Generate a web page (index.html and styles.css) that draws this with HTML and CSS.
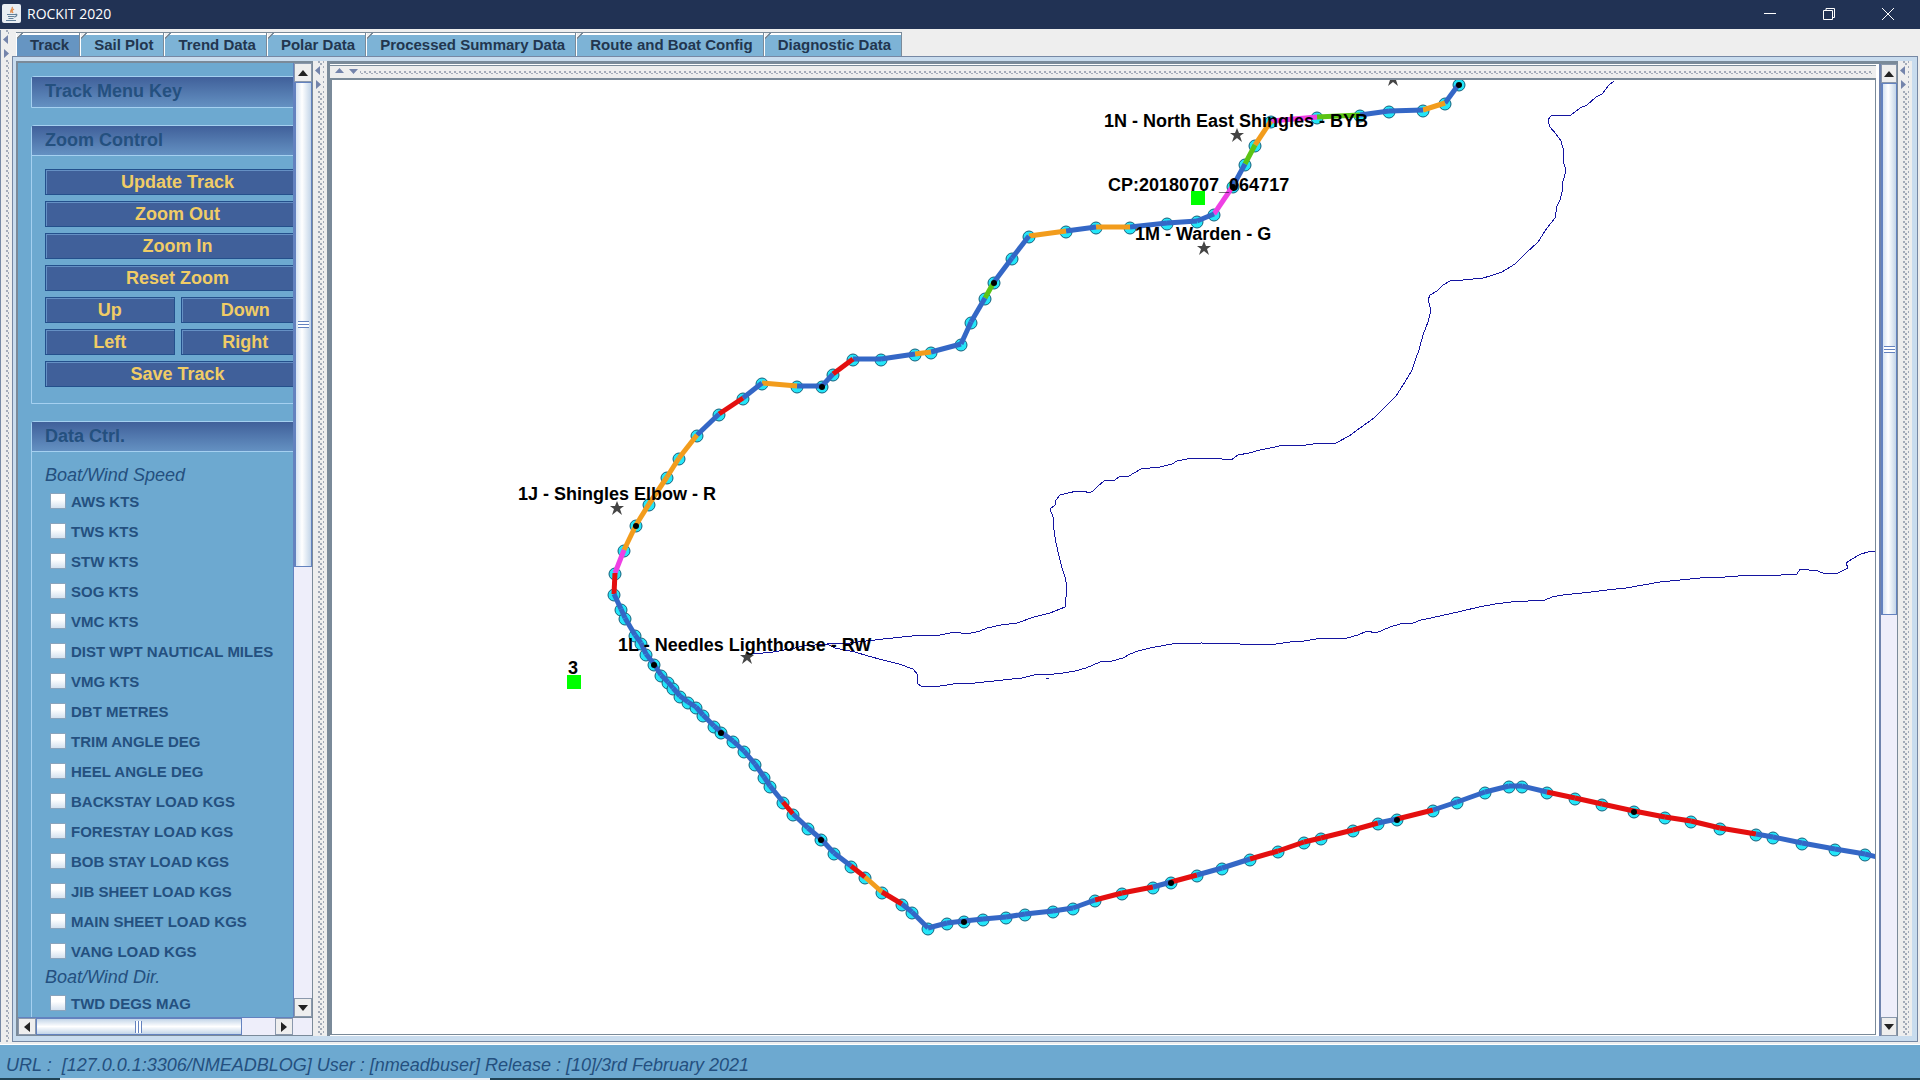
FILE: index.html
```html
<!DOCTYPE html>
<html lang="en">
<head>
    <meta charset="UTF-8">
    <meta name="viewport" content="width=device-width, initial-scale=1.0">
    <title>ROCKIT 2020</title>
    <link rel="stylesheet" href="styles.css">
</head>
<body>
    <header class="titlebar">
        <svg class="app-icon" width="19" height="19" viewBox="0 0 19 19">
            <rect width="19" height="19" rx="2" fill="#e9eef3"/>
            <path d="M10 3c2 2-3 3-1 6M12 5c-3 2-2 2-1 4" fill="none" stroke="#e08a4a" stroke-width="1.3"/>
            <path d="M5 10.500h8M6 12.500h6M6.500 14.500h5M4 16.500h10M13 10.500c3-1 2 2-1 2.500" fill="none" stroke="#62809a" stroke-width="1.2"/>
        </svg>
        <h1 class="title">ROCKIT 2020</h1>
        <button class="win-button" aria-label="Minimize">
            <svg width="14" height="14" viewBox="0 0 14 14"><path d="M1 6.500h12"/></svg>
        </button>
        <button class="win-button" aria-label="Restore">
            <svg width="14" height="14" viewBox="0 0 14 14"><path d="M1.500 3.500h9v9h-9zM4 3.500v-2h8.500v9h-2"/></svg>
        </button>
        <button class="win-button" aria-label="Close">
            <svg width="14" height="14" viewBox="0 0 14 14"><path d="M1 1l12 12M13 1L1 13"/></svg>
        </button>
    </header>

    <div class="main">
        <div class="splitter edge">
            <svg class="arrows" width="8" height="26" viewBox="0 0 8 26"><path d="M6 1v9L1 5.500zM2 15v9l5-4.500z"/></svg>
        </div>

        <div class="tab-pane">
            <nav class="tabs">
                <button class="tab active">Track</button>
                <button class="tab">Sail Plot</button>
                <button class="tab">Trend Data</button>
                <button class="tab">Polar Data</button>
                <button class="tab">Processed Summary Data</button>
                <button class="tab">Route and Boat Config</button>
                <button class="tab">Diagnostic Data</button>
            </nav>

            <div class="frame">
                <aside class="sidebar">
                    <div class="menu">
                        <section class="group">
                            <h2 class="group-title">Track Menu Key</h2>
                        </section>

                        <section class="group">
                            <h2 class="group-title">Zoom Control</h2>
                            <div class="zoom-buttons">
                                <button class="button">Update Track</button>
                                <button class="button">Zoom Out</button>
                                <button class="button">Zoom In</button>
                                <button class="button">Reset Zoom</button>
                                <button class="button half">Up</button>
                                <button class="button half">Down</button>
                                <button class="button half">Left</button>
                                <button class="button half">Right</button>
                                <button class="button">Save Track</button>
                            </div>
                        </section>

                        <section class="group">
                            <h2 class="group-title">Data Ctrl.</h2>
                            <div class="data-list">
                                <h3>Boat/Wind Speed</h3>
                                <label><input type="checkbox">AWS KTS</label>
                                <label><input type="checkbox">TWS KTS</label>
                                <label><input type="checkbox">STW KTS</label>
                                <label><input type="checkbox">SOG KTS</label>
                                <label><input type="checkbox">VMC KTS</label>
                                <label><input type="checkbox">DIST WPT NAUTICAL MILES</label>
                                <label><input type="checkbox">VMG KTS</label>
                                <label><input type="checkbox">DBT METRES</label>
                                <label><input type="checkbox">TRIM ANGLE DEG</label>
                                <label><input type="checkbox">HEEL ANGLE DEG</label>
                                <label><input type="checkbox">BACKSTAY LOAD KGS</label>
                                <label><input type="checkbox">FORESTAY LOAD KGS</label>
                                <label><input type="checkbox">BOB STAY LOAD KGS</label>
                                <label><input type="checkbox">JIB SHEET LOAD KGS</label>
                                <label><input type="checkbox">MAIN SHEET LOAD KGS</label>
                                <label><input type="checkbox">VANG LOAD KGS</label>
                                <h3>Boat/Wind Dir.</h3>
                                <label><input type="checkbox">TWD DEGS MAG</label>
                            </div>
                        </section>
                    </div>

                    <div class="scrollbar vertical">
                        <button class="arrow" aria-label="Scroll up"><svg width="10" height="6"><path d="M5 0l5 6H0z"/></svg></button>
                        <div class="rail"><div class="thumb" style="height: 53%"></div></div>
                        <button class="arrow" aria-label="Scroll down"><svg width="10" height="6"><path d="M0 0h10L5 6z"/></svg></button>
                    </div>

                    <div class="scrollbar horizontal">
                        <button class="arrow" aria-label="Scroll left"><svg width="6" height="10"><path d="M6 0v10L0 5z"/></svg></button>
                        <div class="rail"><div class="thumb" style="width: 86%"></div></div>
                        <button class="arrow" aria-label="Scroll right"><svg width="6" height="10"><path d="M0 0v10l6-5z"/></svg></button>
                    </div>
                    <div class="corner"></div>
                </aside>

                <div class="splitter">
                    <svg class="arrows" width="8" height="26" viewBox="0 0 8 26"><path d="M6 1v9L1 5.500zM2 15v9l5-4.500z"/></svg>
                </div>

                <div class="chart-pane">
                    <div class="chart-column">
                        <div class="splitter across">
                            <svg class="arrows" width="26" height="6" viewBox="0 0 26 6"><path d="M1 5h9L5.500 0zM15 1h9l-4.500 5z"/></svg>
                        </div>
                        <svg class="chart">
                            <g transform="translate(-332 -80)">
                                <g class="coast">
                                    <path d="M1614 81L1609 85 1602 94 1596 97 1587 105 1580 108 1571 115 1551 116 1548 120 1550 127 1556 134 1561 141 1564 152 1563 160 1566 171 1563 181 1562 192 1560 200 1557 206 1555 218 1547 228 1538 242 1526 253 1515 264 1502 272 1490 276 1483 278 1463 280 1450 281 1443 285 1437 291 1430 295 1428 300 1431 310 1428 322 1423 335 1419 350 1416 358 1412 370 1405 382 1396 396 1385 407 1374 418 1360 428 1349 436 1336 443 1320 443 1299 446 1284 445 1270 448 1260 450 1249 453 1238 455 1231 460 1222 459 1212 458 1187 459 1177 461 1172 464 1160 467 1141 469 1134 473 1129 476 1119 477 1115 480 1104 481 1098 486 1093 491 1089 493 1084 491 1077 491 1068 493 1060 495 1056 500 1055 505 1050 509 1053 517 1054 530 1056 543 1059 556 1062 568 1065 577 1067 587 1065 607 1050 613 1034 617 1017 623 1001 625 987 628 980 631 967 634 955 632 940 635 912 636 883 639 850 643 827 644 804 646 790 649 773 652 753 654"/>
                                    <path d="M827 644L835 648 855 652 868 656 883 660 899 664 913 669 918 675 917 683 922 687 940 686 960 683 975 683 1003 680 1022 678 1038 674 1046 675 1063 673 1075 671 1086 668 1093 665 1100 662 1112 661 1123 658 1130 654 1138 651 1150 648 1172 644 1201 643 1240 644 1276 644 1290 642 1304 641 1316 639 1330 638 1347 638 1358 635 1367 631 1376 633 1390 627 1400 624 1413 623 1421 620 1431 618 1444 615 1458 612 1479 607 1495 604 1511 602 1545 600 1552 597 1563 595 1591 592 1607 590 1626 588 1643 585 1660 582 1680 580 1700 578 1725 577 1752 575 1766 576 1797 574 1800 569 1818 571 1825 574 1838 573 1848 568 1846 563 1852 559 1861 554 1868 552 1876 551M1046 678h3"/>
                                </g>
                                <g id="track"></g>
                                <g id="marks"></g>
                                <g class="labels">
                                    <text x="1104" y="127">1N - North East Shingles - BYB</text>
                                    <text x="1108" y="191">CP:20180707_064717</text>
                                    <text x="1135" y="240">1M - Warden - G</text>
                                    <text x="518" y="500">1J - Shingles Elbow - R</text>
                                    <text x="618" y="651">1L - Needles Lighthouse - RW</text>
                                    <text x="568" y="674">3</text>
                                </g>
                            </g>
                        </svg>
                    </div>
                    <div class="scrollbar vertical">
                        <button class="arrow" aria-label="Scroll up"><svg width="10" height="6"><path d="M5 0l5 6H0z"/></svg></button>
                        <div class="rail"><div class="thumb" style="height: 57%"></div></div>
                        <button class="arrow" aria-label="Scroll down"><svg width="10" height="6"><path d="M0 0h10L5 6z"/></svg></button>
                    </div>
                </div>

                <div class="splitter">
                    <svg class="arrows" width="8" height="26" viewBox="0 0 8 26"><path d="M6 1v9L1 5.500zM2 15v9l5-4.500z"/></svg>
                </div>
            </div>
        </div>
    </div>

    <footer class="status">URL :&nbsp; [127.0.0.1:3306/NMEADBLOG] User : [nmeadbuser] Release : [10]/3rd February 2021</footer>
    <div class="taskbar"><div class="taskbar-item"></div></div>

    <script src="track.js"></script>
</body>
</html>
```
FILE: styles.css
```css
* {
    box-sizing: border-box;
}
body {
    margin: 0;
    height: 100vh;
    display: flex;
    flex-direction: column;
    overflow: hidden;
    background-color: #eeeeee;
    font-family: "Liberation Sans", Arial, sans-serif;
    color: #24507f;
}
button {
    font-family: inherit;
    padding: 0;
    border: none;
    cursor: pointer;
}
h1, h2, h3 {
    margin: 0;
}

/* title bar */
.titlebar {
    flex: none;
    display: flex;
    align-items: center;
    height: 29px;
    padding: 0 3px 2px 2px;
    background-color: #213254;
}
.title {
    flex: 1;
    margin-left: 6px;
    font-family: "Open Sans", "Noto Sans", sans-serif;
    font-size: 14px;
    font-weight: 400;
    line-height: 26px;
    color: white;
}
.win-button {
    width: 59px;
    height: 27px;
    background: none;
}
.win-button svg {
    display: block;
    margin: 0 auto;
    fill: none;
    stroke: white;
}

/* layout */
.main {
    flex: 1;
    min-height: 0;
    display: flex;
    padding: 1px 2px 2px 0;
    border-bottom: 1px solid white;
}
.tab-pane {
    flex: 1;
    min-width: 0;
    display: flex;
    flex-direction: column;
}
.frame {
    flex: 1;
    min-height: 0;
    display: flex;
    padding: 4px 5px 5px 3px;
    border: 1px solid #7688a4;
    background-color: #c9dcee;
}

/* split pane dividers */
.splitter {
    flex: none;
    position: relative;
    width: 14px;
    padding: 0 3px 0 5px;
    background:
        radial-gradient(circle at 1px 1px, #a3abb9 1px, transparent 1px) 0 0 / 5px 5px content-box,
        radial-gradient(circle at 3px 3px, #a3abb9 1px, transparent 1px) 0 0 / 5px 5px content-box,
        linear-gradient(#eeeeee, #eeeeee) border-box;
}
.edge {
    width: 12px;
    border-left: 1px solid #7688a4;
}
.across {
    width: auto;
    height: 15px;
    padding: 5px 4px 4px;
    border-top: 1px solid #7a8a99;
    border-bottom: 2px solid #7a8a99;
}
.arrows {
    position: absolute;
    top: 4px;
    left: 1px;
    fill: #7484ab;
    background-color: #eeeeee;
}
.across .arrows {
    left: 4px;
    top: 2px;
}

/* tabs */
.tabs {
    flex: none;
    display: flex;
    height: 26px;
    padding: 2px 0 0 4px;
}
.tab {
    height: 24px;
    padding: 0 10px 0 14px;
    border-top: 1px solid #7a8a99;
    border-right: 1px solid #7a8a99;
    background: linear-gradient(135deg, #eeeeee 4px, #7a8a99 4px, #7a8a99 5px, transparent 5px), linear-gradient(#ffffff 2px, transparent 2px), #7db3d6;
    box-shadow: inset 1px 0 0 white;
    color: #22364f;
    font-size: 15px;
    font-weight: bold;
}
.tab.active {
    background: linear-gradient(135deg, #eeeeee 4px, #7a8a99 4px, #7a8a99 5px, transparent 5px), linear-gradient(#ffffff 2px, transparent 2px), #6695c2;
}

/* left menu */
.sidebar {
    flex: none;
    width: 297px;
    display: grid;
    grid-template-columns: 1fr 20px;
    grid-template-rows: minmax(0, 1fr) 19px;
    border-top: 2px solid #7a8a99;
    border-left: 2px solid #7a8a99;
    background-color: #eeeefa;
}
.menu {
    overflow: hidden;
    padding: 13px 0 0 13px;
    background-color: #6da9d0;
}
.group {
    width: 300px;
    margin-bottom: 17px;
    border: 1px solid #a5d0f0;
    border-top-left-radius: 3px;
}
.group-title {
    height: 30px;
    padding-left: 13px;
    background: linear-gradient(#40609a, #6491c2);
    font-size: 18px;
    line-height: 29px;
}
.group-title:not(:last-child) {
    border-bottom: 1px solid #a5d0f0;
}
.zoom-buttons {
    display: grid;
    grid-template-columns: 1fr 1fr;
    gap: 6px;
    width: 278px;
    padding: 13px 0 16px 13px;
}
.button {
    grid-column: span 2;
    height: 26px;
    border: 1px solid #24508c;
    background-color: #40609a;
    box-shadow: inset 1px 1px 0 #6590c4;
    color: #f0cc66;
    font-size: 18px;
    font-weight: bold;
    line-height: 24px;
}
.button.half {
    grid-column: span 1;
}
.data-list {
    padding: 12px 0 0 13px;
}
.data-list h3 {
    font-size: 18px;
    font-weight: 400;
    font-style: italic;
    line-height: 22px;
}
.data-list label {
    display: flex;
    align-items: center;
    height: 30px;
    padding-left: 5px;
    font-size: 15px;
    font-weight: bold;
}
.data-list input {
    appearance: none;
    width: 16px;
    height: 16px;
    margin: 0 5px 0 0;
    border: 1px solid #8aa4bd;
    background: linear-gradient(#ffffff 40%, #d5e1ef);
}

/* scroll bars */
.scrollbar {
    display: flex;
    background-color: #eeeefa;
}
.scrollbar .arrow {
    flex: none;
    width: 18px;
    height: 19px;
    border: 1px solid #8a98ac;
    background-color: #eeeeee;
}
.arrow svg {
    display: block;
    margin: auto;
    fill: #222222;
}
.rail {
    flex: 1;
    display: flex;
}
.thumb {
    display: flex;
    align-items: center;
    justify-content: center;
    border: 1px solid #6382bf;
}
.vertical {
    flex-direction: column;
    border-left: 1px solid #6382bf;
    border-right: 1px solid #7a8a99;
}
.vertical .thumb {
    width: 100%;
    border-left-width: 2px;
    background: linear-gradient(90deg, #d5e3f2, #ffffff 40%, #c3d5e8);
}
.vertical .arrow {
    width: 100%;
}
.horizontal {
    border-top: 1px solid #6382bf;
    border-bottom: 1px solid #7a8a99;
}
.horizontal .arrow {
    height: 100%;
}
.horizontal .thumb {
    background: linear-gradient(#c3d5e8, #ffffff 50%, #c3d5e8);
}
.thumb::before {
    content: "";
    width: 11px;
    height: 7px;
    background: repeating-linear-gradient(#6382bf 0 1px, #ffffff 1px 3px);
}
.horizontal .thumb::before {
    width: 7px;
    height: 12px;
    background: repeating-linear-gradient(90deg, #6382bf 0 1px, #ffffff 1px 3px);
}
.corner {
    border: 1px solid #7a8a99;
    border-left: none;
}

/* chart */
.chart-pane {
    flex: 1;
    min-width: 0;
    display: flex;
    gap: 3px;
    border-top: 3px solid #7a8a99;
    border-left: 3px solid #7a8a99;
    background-color: white;
}
.chart-column {
    flex: 1;
    min-width: 0;
    display: flex;
    flex-direction: column;
    padding: 1px 0;
}
.chart-pane .scrollbar {
    width: 19px;
    border-left: 2px solid #6f83ad;
}
.chart {
    flex: 1;
    min-height: 0;
    width: 100%;
    border: 1px solid #7a8a99;
    border-top: none;
    border-left-width: 2px;
    background-color: white;
}
.coast path {
    fill: none;
    stroke: #1414a0;
    stroke-width: 1;
    shape-rendering: crispEdges;
}
.fix {
    fill: #24e6f8;
    stroke: #14607c;
}
.leg {
    stroke-width: 5;
}
.square {
    fill: #00ff00;
}
.star {
    fill: #444444;
}
.labels {
    fill: black;
    font-size: 18px;
    font-weight: bold;
}

/* status line */
.status {
    flex: none;
    height: 33px;
    padding-left: 6px;
    background-color: #6da9d0;
    font-size: 18px;
    font-style: italic;
    line-height: 40px;
    white-space: nowrap;
}
.taskbar {
    flex: none;
    height: 2px;
    padding-left: 60px;
    background-color: #1f4254;
}
.taskbar-item {
    width: 430px;
    height: 2px;
    background-color: #e8eef4;
}
```
FILE: track.js
```js
// position fixes: x, y, colour of the leg to the next fix, 1 = hour mark
var B = '#3467c6', O = '#f29c1c', R = '#e40f0f', M = '#ee40e4', G = '#5cc414';
var fixes = [
    [1459,85,B,1], [1445,104,O], [1423,111,B], [1389,112,B], [1360,116,G], [1317,118,M],
    [1271,122,O], [1255,146,G], [1245,165,B], [1233,187,M,1], [1214,215,B], [1197,222,B],
    [1167,224,B], [1130,228,O], [1096,228,B], [1066,232,O], [1029,237,B], [1012,259,B],
    [994,283,G,1], [985,299,B], [971,323,B], [961,345,B], [931,353,O], [915,355,B],
    [881,360,B], [853,360,R], [833,375,B], [822,387,B,1], [797,387,O], [762,384,B],
    [743,399,R], [719,415,B], [697,436,O], [679,459,O], [667,478,O], [649,505,O],
    [636,526,O,1], [624,551,M], [615,574,R], [614,595,B], [621,610,B], [625,619,B],
    [635,636,B], [641,644,B], [646,655,B], [654,665,B,1], [661,676,B], [668,683,B],
    [673,689,B], [680,697,B], [688,703,B], [696,708,B], [703,716,B], [714,727,B],
    [721,733,B,1], [733,742,B], [744,752,B], [755,765,B], [764,778,B], [770,787,B],
    [783,803,R], [793,815,B], [808,829,B], [821,840,B,1], [834,854,B], [851,867,R],
    [865,878,O], [882,893,R], [902,905,B], [912,913,B], [928,929,B], [947,924,B],
    [964,922,B,1], [983,920,B], [1006,918,B], [1025,915,B], [1053,912,B], [1073,909,B],
    [1095,901,R], [1122,894,R], [1153,888,B], [1171,883,R,1], [1197,876,B], [1222,869,B],
    [1250,860,R], [1278,852,R], [1304,843,R], [1321,839,R], [1353,831,R], [1378,824,B],
    [1397,820,R,1], [1433,811,B], [1457,803,B], [1485,793,B], [1509,787,B], [1522,787,B],
    [1547,793,R], [1575,799,R], [1602,805,R], [1634,812,R,1], [1665,818,R], [1691,822,R],
    [1720,829,R], [1756,835,B], [1773,838,B], [1802,844,B], [1835,850,B], [1865,855,B],
    [1885,860,B]
];
var stars = [[1393,79], [1237,135], [1204,248], [617,508], [747,657]];
var squares = [[1198,198], [574,682]];

function draw(parent, tag, attrs) {
    var el = document.createElementNS('http://www.w3.org/2000/svg', tag);
    for (var key in attrs) {
        el.setAttribute(key, attrs[key]);
    }
    document.getElementById(parent).appendChild(el);
}

fixes.forEach(function(f) {
    draw('track', 'circle', { 'class': 'fix', cx: f[0], cy: f[1], r: 6 });
});
for (var i = 0; i < fixes.length - 1; i++) {
    var a = fixes[i], b = fixes[i + 1];
    draw('track', 'line', { 'class': 'leg', x1: a[0], y1: a[1] - 1, x2: b[0], y2: b[1] - 1, stroke: a[2] });
}
fixes.forEach(function(f) {
    if (f[3]) {
        draw('track', 'circle', { cx: f[0], cy: f[1], r: 3 });
    }
});
stars.forEach(function(s) {
    draw('marks', 'path', { 'class': 'star', d: 'M' + s[0] + ' ' + (s[1] - 7) + 'l2 5h5l-4 3 2 6-5-4-5 4 2-6-4-3h5z' });
});
squares.forEach(function(s) {
    draw('marks', 'rect', { 'class': 'square', x: s[0] - 7, y: s[1] - 7, width: 14, height: 14 });
});
```
